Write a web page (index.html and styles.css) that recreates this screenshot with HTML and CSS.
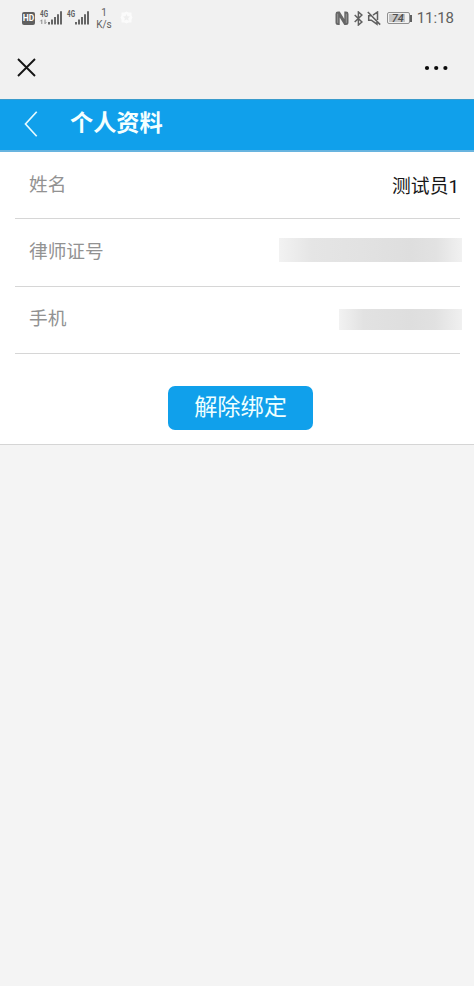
FILE: index.html
```html
<!DOCTYPE html>
<html lang="zh-CN">
<head>
<meta charset="utf-8">
<title>个人资料</title>
<link rel="stylesheet" href="styles.css">
</head>
<body>
<div class="status">
  <div class="status-left">
    <span class="hd">HD</span>
    <svg class="signal first" width="23" height="16" viewBox="0 0 23 16">
      <text class="net" x="0" y="7.400" textLength="8" lengthAdjust="spacingAndGlyphs">4G</text>
      <path d="M1.800 14V9.800L.3 11.300M5 9.500v4.200l1.400-1.500" fill="none" stroke="#808080" stroke-width=".9"/>
      <path d="M8 12h2v2.500h-2zM11 9.500h2v5h-2zM14 7h2v7.500h-2zM17 4.300h2v10.200h-2zM20 1.300h2v13.200h-2z" fill="#666"/>
    </svg>
    <svg class="signal second" width="23" height="16" viewBox="0 0 23 16">
      <text class="net" x="0" y="7.400" textLength="8" lengthAdjust="spacingAndGlyphs">4G</text>
      <path d="M8 12h2v2.500h-2zM11 9.500h2v5h-2zM14 7h2v7.500h-2zM17 4.300h2v10.200h-2zM20 1.300h2v13.200h-2z" fill="#666"/>
    </svg>
    <span class="speed"><span>1</span><span>K/s</span></span>
    <svg class="badge" width="13" height="13" viewBox="0 0 13 13">
      <path d="M1.500 1.500h3l2-1 2 1h3v3l1 2-1 2v3h-3l-2 1-2-1h-3v-3l-1-2 1-2z" fill="#fbfbfb"/>
      <path d="M6.500 3l1.100 2.200 2.400.4-1.800 1.700.5 2.400-2.200-1.100-2.200 1.100.5-2.400L3 5.600l2.400-.4z" fill="#efefef"/>
    </svg>
  </div>
  <div class="status-right">
    <svg width="14" height="15" viewBox="0 0 14 15">
      <path d="M4.500.6H3Q.5.600.5 3v8.500q0 2.500 2.500 2.500h1.700V6.500l4.600 7.500H11q2.500 0 2.500-2.500V3Q13.500.6 11 .6H9.300v7.500L4.700.6z" fill="#666"/>
      <path d="M2.700 2.700v9.200M11.300 2.700v9.200" stroke="#aaa" stroke-width=".7"/>
    </svg>
    <svg class="bt" width="9" height="15" viewBox="0 0 9 15" fill="none" stroke="#606060" stroke-width="1.500">
      <path d="M.7 4l7.200 7-3.500 3V1l3.500 3-7.200 7"/>
    </svg>
    <svg class="mute" width="14" height="15" viewBox="0 0 14 15" fill="none" stroke="#606060" stroke-width="1.500">
      <path d="M4.200 4.700H1.700v4.500H4.300l5.700 4V10M6 4.200l4.500-3.200v8M.8 1l12.400 12.600"/>
    </svg>
    <span class="battery"><span class="level">74</span></span>
    <span class="tip"></span>
    <span class="time">11:18</span>
  </div>
</div>
<div class="topbar">
  <svg width="20" height="20" viewBox="0 0 20 20"><path d="M1 1l17 17M18 1l-17 17" stroke="#151515" stroke-width="1.900" fill="none"/></svg>
  <svg width="24" height="6" viewBox="0 0 24 6" fill="#0b0b0b"><circle cx="3" cy="3" r="2.100"/><circle cx="12.200" cy="3" r="2.100"/><circle cx="21.400" cy="3" r="2.100"/></svg>
</div>
<header class="header">
  <svg class="back" width="14" height="26" viewBox="0 0 14 26"><path d="M12.700 .8L1.500 13l11.200 12.200" fill="none" stroke="#e4faff" stroke-width="1.700"/></svg>
  <h1>个人资料</h1>
</header>
<main class="panel">
  <div class="row"><span class="label">姓名</span><span class="value">测试员1</span></div>
  <div class="row"><span class="label">律师证号</span><span class="mask license"></span></div>
  <div class="row"><span class="label">手机</span><span class="mask phone"></span></div>
  <button class="unbind" type="button">解除绑定</button>
</main>
</body>
</html>
```
FILE: styles.css
```css
* { box-sizing: border-box; }
body {
  margin: 0;
  min-height: 986px;
  background: #f4f4f4;
  font-family: Roboto, "Noto Sans CJK SC", sans-serif;
}
svg { display: block; flex: none; }
.status {
  height: 36px;
  padding: 0 20px 0 22px;
  display: flex;
  justify-content: space-between;
  background: #f1f1f1;
  color: #606060;
}
.status-left, .status-right { display: flex; align-items: center; }
.hd {
  width: 13px;
  height: 13px;
  border-radius: 2px;
  background: #606060;
  color: #fff;
  font-size: 8.5px;
  font-weight: 700;
  line-height: 13px;
  text-align: center;
}
.signal { overflow: visible; }
.signal.first { margin-left: 5px; }
.signal.second { margin-left: 4px; }
.net { font-size: 9.5px; font-weight: 700; fill: #606060; }
.speed {
  margin-left: 6px;
  width: 16px;
  display: flex;
  flex-direction: column;
  align-items: center;
  font-size: 10px;
  line-height: 12px;
  padding-top: 1px;
}
.badge { margin-left: 8px; margin-top: -2px; }
.bt { margin-left: 5px; }
.mute { margin-left: 4px; }
.battery {
  margin-left: 6px;
  width: 23px;
  height: 12px;
  padding: 1px;
  border: 1px solid #8f8f8f;
  border-radius: 2px;
}
.level {
  display: block;
  width: 16px;
  height: 8px;
  padding-left: 3px;
  background: #c5c5c5;
  color: #505050;
  font-size: 11px;
  font-style: italic;
  font-weight: 500;
  line-height: 9px;
}
.tip { width: 2px; height: 7px; background: #606060; }
.time { margin-left: 5px; font-size: 15px; line-height: 18px; }
.topbar {
  height: 63px;
  padding: 0 26px 0 17px;
  display: flex;
  align-items: center;
  justify-content: space-between;
  background: #f1f1f1;
}
.header {
  height: 53px;
  padding-left: 24px;
  display: flex;
  align-items: center;
  background: #10a0eb;
  border-top: 1px solid #399bcc;
  border-bottom: 2px solid #68b4df;
}
.back { margin-top: -2px; }
.header h1 {
  margin: -5px 0 0 32px;
  color: #f4ffff;
  font-size: 23.2px;
  font-weight: 700;
  line-height: 32px;
}
.panel {
  height: 293px;
  padding: 0 14px 0 15px;
  display: flex;
  flex-direction: column;
  background: #fff;
  border-bottom: 1px solid #d5d5d5;
}
.row {
  height: 67.3px;
  flex: none;
  display: flex;
  align-items: center;
  justify-content: space-between;
  padding-left: 14px;
  border-bottom: 1px solid #d6d6d6;
}
.label { color: #929292; font-size: 18.7px; line-height: 28px; margin-top: -1px; }
.value { color: #161616; font-size: 18.8px; line-height: 28px; margin: 4px 1px 0 0; }
.mask { margin-right: -2px; }
.license {
  width: 183px;
  height: 24px;
  margin-top: -4px;
  background: linear-gradient(90deg, #f2f2f2, #e5e5e5 18%, #e2e2e2 45%, #dedede 72%, #e2e2e2 86%, #f1f1f1);
}
.phone {
  width: 123px;
  height: 21px;
  background: linear-gradient(90deg, #f2f2f2, #e2e2e2 20%, #dedede 58%, #e1e1e1 78%, #f0f0f0);
}
.unbind {
  align-self: center;
  width: 145px;
  height: 44px;
  margin: 32px 0 0 6px;
  padding: 0 0 2px;
  border: 0;
  border-radius: 7px;
  background: #10a0eb;
  color: #efffff;
  font: 400 23.2px/40px Roboto, "Noto Sans CJK SC", sans-serif;
}
```
